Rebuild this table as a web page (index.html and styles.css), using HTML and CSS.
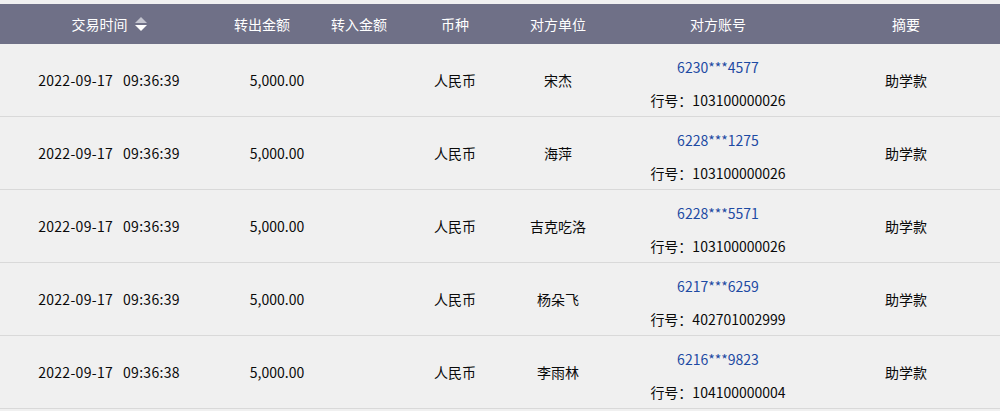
FILE: index.html
```html
<!DOCTYPE html>
<html lang="zh-CN">
<head>
<meta charset="utf-8">
<link rel="stylesheet" href="styles.css">
</head>
<body>
<div class="table">
  <div class="row head">
    <div class="c c1">交易时间<svg class="sort" width="12" height="16" viewBox="0 0 12 16"><path d="M6 1 L12 7 L0 7 Z" fill="#c3c4cf"/><path d="M0 9 L12 9 L6 15 Z" fill="#ffffff"/></svg></div>
    <div class="c c2">转出金额</div>
    <div class="c c3">转入金额</div>
    <div class="c c4">币种</div>
    <div class="c c5">对方单位</div>
    <div class="c c6">对方账号</div>
    <div class="c c7">摘要</div>
  </div>
  <div class="row">
    <div class="c c1 dt"><span>2022-09-17</span><span class="tm">09:36:39</span></div>
    <div class="c c2 amt">5,000.00</div>
    <div class="c c3"></div>
    <div class="c c4">人民币</div>
    <div class="c c5">宋杰</div>
    <div class="c c6 acct"><div class="no">6230***4577</div><div class="bank">行号：103100000026</div></div>
    <div class="c c7">助学款</div>
  </div>
  <div class="row">
    <div class="c c1 dt"><span>2022-09-17</span><span class="tm">09:36:39</span></div>
    <div class="c c2 amt">5,000.00</div>
    <div class="c c3"></div>
    <div class="c c4">人民币</div>
    <div class="c c5">海萍</div>
    <div class="c c6 acct"><div class="no">6228***1275</div><div class="bank">行号：103100000026</div></div>
    <div class="c c7">助学款</div>
  </div>
  <div class="row">
    <div class="c c1 dt"><span>2022-09-17</span><span class="tm">09:36:39</span></div>
    <div class="c c2 amt">5,000.00</div>
    <div class="c c3"></div>
    <div class="c c4">人民币</div>
    <div class="c c5">吉克吃洛</div>
    <div class="c c6 acct"><div class="no">6228***5571</div><div class="bank">行号：103100000026</div></div>
    <div class="c c7">助学款</div>
  </div>
  <div class="row">
    <div class="c c1 dt"><span>2022-09-17</span><span class="tm">09:36:39</span></div>
    <div class="c c2 amt">5,000.00</div>
    <div class="c c3"></div>
    <div class="c c4">人民币</div>
    <div class="c c5">杨朵飞</div>
    <div class="c c6 acct"><div class="no">6217***6259</div><div class="bank">行号：402701002999</div></div>
    <div class="c c7">助学款</div>
  </div>
  <div class="row">
    <div class="c c1 dt"><span>2022-09-17</span><span class="tm">09:36:38</span></div>
    <div class="c c2 amt">5,000.00</div>
    <div class="c c3"></div>
    <div class="c c4">人民币</div>
    <div class="c c5">李雨林</div>
    <div class="c c6 acct"><div class="no">6216***9823</div><div class="bank">行号：104100000004</div></div>
    <div class="c c7">助学款</div>
  </div>
</div>
</body>
</html>
```

FILE: styles.css
```css
html, body {
  margin: 0;
  padding: 0;
  background: #f0f0f0;
}
body {
  font-family: "Noto Sans CJK SC", "Noto Sans", sans-serif;
  font-size: 14px;
  color: #0a0a0a;
  padding-top: 4px;
}
.table {
  width: 1000px;
}
.row {
  display: flex;
  height: 72px;
  border-bottom: 1px solid #d9d9d9;
}
.row.head {
  height: 40px;
  border-bottom: none;
  background: #6f7087;
  color: #ffffff;
}
.c {
  display: flex;
  align-items: center;
  justify-content: center;
  white-space: nowrap;
}
.c1 { width: 218px; }
.c2 { width: 88px; }
.c3 { width: 106px; }
.c4 { width: 86px; }
.c5 { width: 120px; }
.c6 { width: 200px; }
.c7 { width: 176px; }
.dt {
  letter-spacing: 0.3px;
}
.dt .tm {
  margin-left: 10px;
}
.amt {
  padding-left: 30px;
  box-sizing: border-box;
}
.sort {
  margin-left: 7px;
}
.acct {
  flex-direction: column;
  padding-top: 7px;
  box-sizing: border-box;
}
.acct .no {
  color: #1d4aa3;
  line-height: 26px;
}
.acct .bank {
  line-height: 26px;
  margin-top: 7px;
}
```
